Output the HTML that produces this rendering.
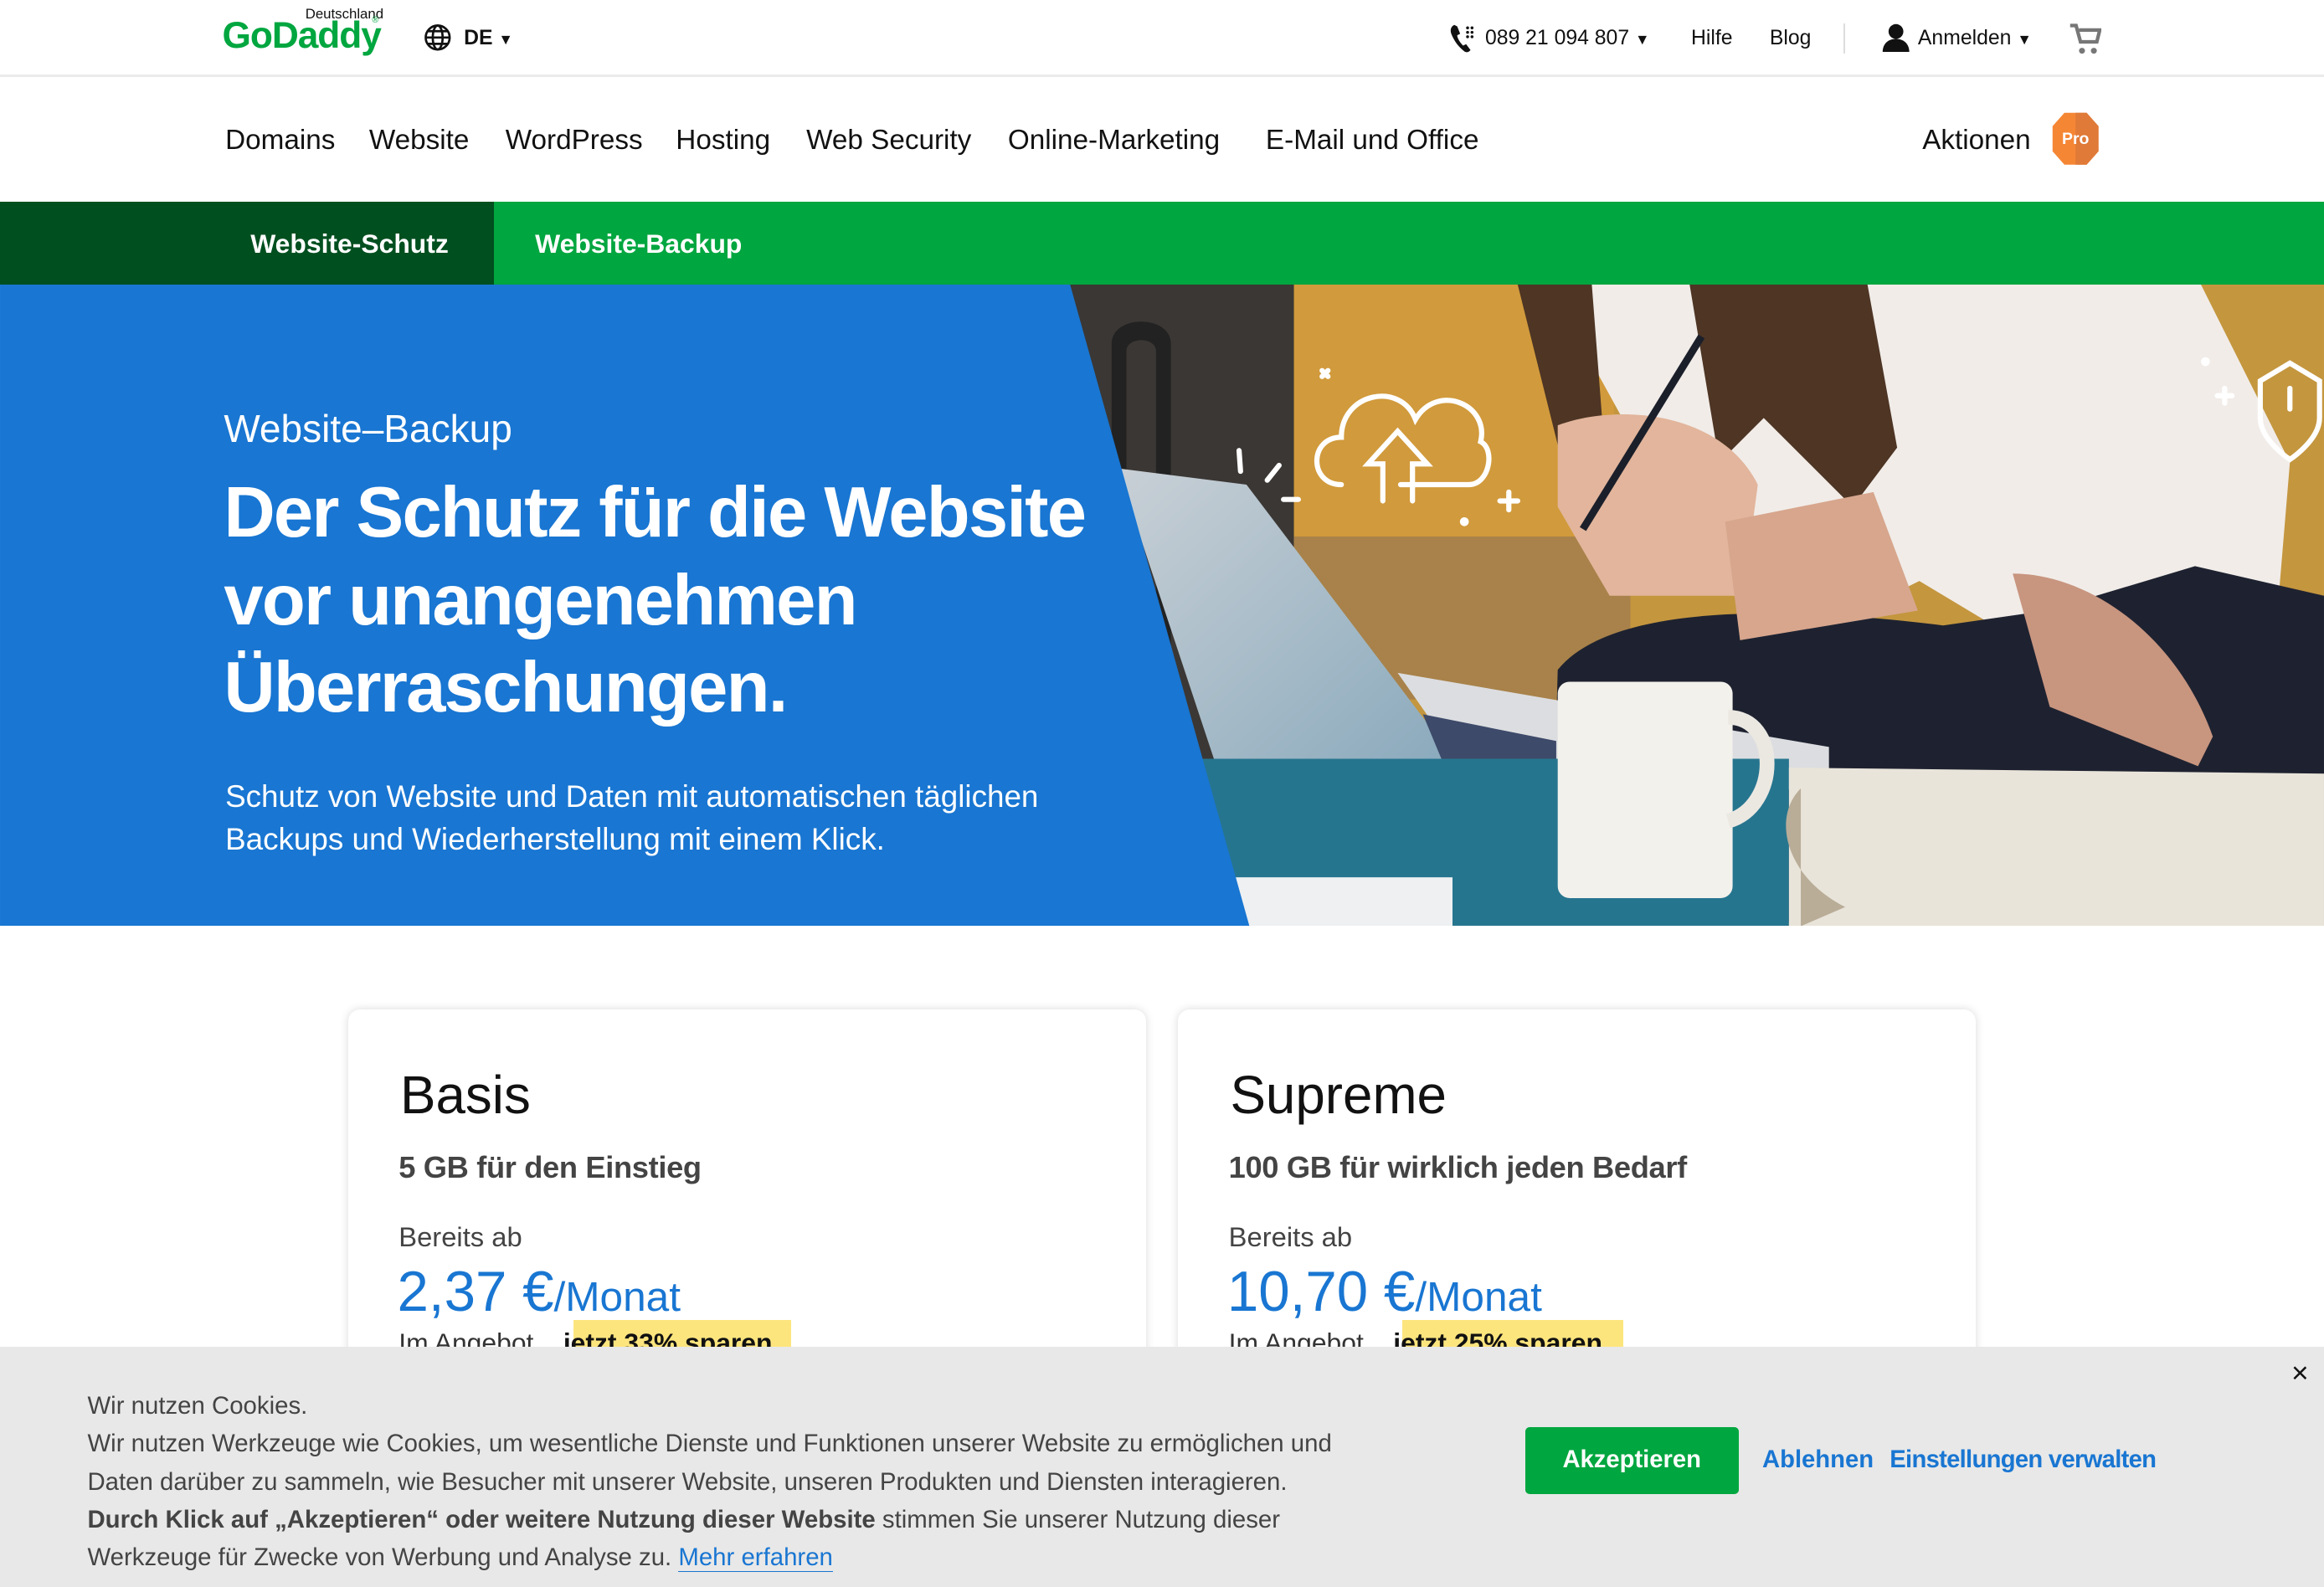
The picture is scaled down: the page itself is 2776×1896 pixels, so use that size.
<!DOCTYPE html>
<html><head><meta charset="utf-8">
<style>
*{margin:0;padding:0;box-sizing:border-box}
html,body{width:2776px;height:1896px;overflow:hidden;background:#fff}
#w{zoom:1.77041;width:1568px;height:1071px;position:relative;font-family:"Liberation Sans",sans-serif;color:#111;overflow:hidden}
.a{position:absolute;white-space:nowrap}
.nav{font-size:18.8px;top:84px;color:#111}
.top{font-size:14px;top:18px}
</style></head><body><div id="w">
<div class="a" style="left:206px;top:4px;font-size:9.5px;color:#111">Deutschland</div>
<div class="a" style="left:150px;top:10px;font-size:25px;font-weight:bold;color:#00a63f;letter-spacing:-.6px">GoDaddy</div>
<div class="a" style="left:251px;top:10px;font-size:6px;color:#00a63f">®</div>
<svg class="a" style="left:286px;top:16px" width="19" height="19" viewBox="0 0 20 20" fill="none" stroke="#111" stroke-width="1.6"><circle cx="10" cy="10" r="8.5"/><ellipse cx="10" cy="10" rx="3.5" ry="8.5"/><path d="M1.5 10h17M3 5.5h14M3 14.5h14"/></svg>
<div class="a top" style="left:313px;top:18px;font-size:14px;font-weight:bold">DE <span style="font-size:10px">▼</span></div>
<svg class="a" style="left:977px;top:16px" width="20" height="20" viewBox="0 0 20 20"><path d="M4 1c-2 1-3 3-2 6 2 5 5 9 9 12 2 1 3 0 4-1l-3-4-2 1c-2-2-4-5-4-7l2-1-2-5z" fill="#111"/><g fill="#111"><circle cx="13" cy="3" r="1"/><circle cx="16" cy="3" r="1"/><circle cx="13" cy="6" r="1"/><circle cx="16" cy="6" r="1"/><circle cx="13" cy="9" r="1"/><circle cx="16" cy="9" r="1"/></g></svg>
<div class="a top" style="left:1002px">089 21 094 807 <span style="font-size:10px">▼</span></div>
<div class="a top" style="left:1141px">Hilfe</div>
<div class="a top" style="left:1194px">Blog</div>
<div class="a" style="left:1244px;top:16px;width:1px;height:20px;background:#ddd"></div>
<svg class="a" style="left:1269px;top:15px" width="20" height="20" viewBox="0 0 20 20"><circle cx="10" cy="6" r="5" fill="#111"/><path d="M1 20c0-6 4-9 9-9s9 3 9 9z" fill="#111"/></svg>
<div class="a top" style="left:1294px">Anmelden <span style="font-size:10px">▼</span></div>
<svg class="a" style="left:1396px;top:15px" width="22" height="22" viewBox="0 0 22 22" fill="#777"><path d="M1 2h4l3 11h11l2-8H7" stroke="#777" stroke-width="2.4" fill="none"/><circle cx="9" cy="19" r="2"/><circle cx="17" cy="19" r="2"/></svg>
<div class="a" style="left:0;top:50px;width:1568px;height:2px;background:#ebebeb"></div>
<div class="a nav" style="left:152px">Domains</div>
<div class="a nav" style="left:249px">Website</div>
<div class="a nav" style="left:341px">WordPress</div>
<div class="a nav" style="left:456px">Hosting</div>
<div class="a nav" style="left:544px">Web Security</div>
<div class="a nav" style="left:680px">Online-Marketing</div>
<div class="a nav" style="left:854px">E-Mail und Office</div>
<div class="a nav" style="left:1297px">Aktionen</div>
<svg class="a" style="left:1384px;top:75px" width="33" height="37" viewBox="0 0 33 37"><path d="M9 1h15l8 9v17l-8 9H9l-8-9V10z" fill="#f58634"/><path d="M16.5 1h7.5l8 9v17l-8 9h-7.5z" fill="#e07a38"/><text x="16.5" y="22" font-family="Liberation Sans" font-size="11" font-weight="bold" fill="#fff" text-anchor="middle">Pro</text></svg>
<div class="a" style="left:0;top:136px;width:1568px;height:56px;background:#00a63f"></div>
<div class="a" style="left:0;top:136px;width:333px;height:56px;background:#004f1f"></div>
<div class="a" style="left:169px;top:154px;font-size:18px;font-weight:bold;color:#fff">Website-Schutz</div>
<div class="a" style="left:361px;top:154px;font-size:18px;font-weight:bold;color:#fff">Website-Backup</div>
<svg class="a" style="left:0;top:192px" width="1568" height="433" viewBox="0 0 1568 433">
<defs>
<linearGradient id="lap" x1="0" y1="0" x2="1" y2="1"><stop offset="0" stop-color="#c9d0d6"/><stop offset="1" stop-color="#7fa3b8"/></linearGradient>
</defs>
<rect x="700" y="0" width="868" height="433" fill="#c4963e"/>
<rect x="700" y="0" width="184" height="330" fill="#3b3734"/>
<path d="M750 40c0-20 40-20 40 0v230h-10v-225c0-10-20-10-20 0v225h-10z" fill="#222"/>
<rect x="873" y="0" width="216" height="210" fill="#d19a3c"/>
<rect x="873" y="170" width="227" height="110" fill="#a8824a"/>
<path d="M1045 0h440l60 120l-10 120l-60 10l-60-30l-70 10l-50-30l-80 40l-60-40z" fill="#f1ece8"/>
<path d="M1320 0h110l-30 40z" fill="#f1ece8"/>
<path d="M1024 0h50l10 130l-30-10zM1140 0h120l20 110l-30 40l-60-60l-30 30z" fill="#4e3524"/>
<path d="M1051 260c40-50 180-40 260-30l70-10 100-30 87 20v220h-460l-60-60z" fill="#1e2230"/>
<path d="M1051 95c40-15 110-10 135 40l-10 75-90 0-35-60z" fill="#e2b59c"/>
<path d="M1164 160l100-20 30 80-120 20z" fill="#d7a68d"/>
<path d="M1358 195c50 0 110 40 135 110l-10 20-100-40z" fill="#c8957f"/>
<path d="M1148 35l-80 130" stroke="#1b1f2a" stroke-width="5"/>
<path d="M754 124l87 11 172 227-194-42z" fill="url(#lap)"/>
<path d="M943 262l291 50v25l-183 25h-38z" fill="#dcdde0"/>
<path d="M960 290l90 18v40l-70-10z" fill="#3d4a6a"/>
<path d="M800 320l407 0v113H830z" fill="#26758f"/>
<path d="M830 400h150v33H840z" fill="#eef0f2"/>
<path d="M1207 326l361 4v103h-361z" fill="#e9e4da"/>
<path d="M1215 340c-20 20-10 60 30 80l-30 13z" fill="#b9ad98"/>
<rect x="1051" y="268" width="118" height="146" rx="8" fill="#f3f1ec"/>
<path d="M1166 292c35 0 35 60 0 70" stroke="#ebe8e2" stroke-width="10" fill="none"/>
<g fill="none" stroke="#fff" stroke-width="3.5" stroke-linecap="round">
<path d="M905 135c-22 0-22-32 0-32c0-30 40-38 50-12c15-25 50-10 44 15c10 5 6 29-8 29h-46"/>
<path d="M933 146v-25h-10l20-22 20 22h-10v25"/>
<path d="M1525 65l20-12 20 12v25c0 15-20 28-20 28s-20-13-20-28z"/>
<path d="M1545 70v14M1018 140v12M1012 146h12M1501 70v10M1496 75h10M836 112l1 14M855 132l8-10M866 145h10M892 58l4 4M896 58l-4 4"/>
</g>
<circle cx="988" cy="160" r="3" fill="#fff"/><circle cx="1488" cy="52" r="3" fill="#fff"/>
<path d="M0 0h722l121 433H0z" fill="#1976d2"/>
</svg>
<div class="a" style="left:151px;top:274px;font-size:26px;color:#fff">Website–Backup</div>
<div class="a" style="left:151px;top:317px;font-size:48px;font-weight:bold;color:#fff;letter-spacing:-1px;line-height:59px">Der Schutz für die Website<br>vor unangenehmen<br>Überraschungen.</div>
<div class="a" style="left:152px;top:523px;font-size:20.8px;color:#fff;line-height:29px">Schutz von Website und Daten mit automatischen täglichen<br>Backups und Wiederherstellung mit einem Klick.</div>
<div class="a" style="left:235px;top:681px;width:538px;height:400px;border-radius:8px;box-shadow:0 0 6px rgba(0,0,0,.15);background:#fff"></div>
<div class="a" style="left:795px;top:681px;width:538px;height:400px;border-radius:8px;box-shadow:0 0 6px rgba(0,0,0,.15);background:#fff"></div>
<div class="a" style="left:270px;top:718px;font-size:36px;color:#111">Basis</div>
<div class="a" style="left:269px;top:776px;font-size:20.5px;color:#444;font-weight:bold;letter-spacing:-.2px">5 GB für den Einstieg</div>
<div class="a" style="left:269px;top:824px;font-size:18.5px;color:#444">Bereits ab</div>
<div class="a" style="left:268px;top:850px;font-size:38px;color:#1976d2">2,37 €<span style="font-size:28px">/Monat</span></div>
<div class="a" style="left:387px;top:891px;width:147px;height:30px;background:#fde57e"></div>
<div class="a" style="left:269px;top:896px;font-size:18px;color:#333">Im Angebot &nbsp;&nbsp;&nbsp;<b style="color:#111">jetzt 33% sparen</b></div>
<div class="a" style="left:830px;top:718px;font-size:36px;color:#111">Supreme</div>
<div class="a" style="left:829px;top:776px;font-size:20.5px;color:#444;font-weight:bold;letter-spacing:-.2px">100 GB für wirklich jeden Bedarf</div>
<div class="a" style="left:829px;top:824px;font-size:18.5px;color:#444">Bereits ab</div>
<div class="a" style="left:828px;top:850px;font-size:38px;color:#1976d2">10,70 €<span style="font-size:28px">/Monat</span></div>
<div class="a" style="left:946px;top:891px;width:149px;height:30px;background:#fde57e"></div>
<div class="a" style="left:829px;top:896px;font-size:18px;color:#333">Im Angebot &nbsp;&nbsp;&nbsp;<b style="color:#111">jetzt 25% sparen</b></div>
<div class="a" style="left:0;top:909px;width:1568px;height:162px;background:#e8e8e8"></div>
<div class="a" style="left:59px;top:936px;font-size:16.6px;color:#444;line-height:25.6px">Wir nutzen Cookies.<br>Wir nutzen Werkzeuge wie Cookies, um wesentliche Dienste und Funktionen unserer Website zu ermöglichen und<br>Daten darüber zu sammeln, wie Besucher mit unserer Website, unseren Produkten und Diensten interagieren.<br><b>Durch Klick auf „Akzeptieren“ oder weitere Nutzung dieser Website</b> stimmen Sie unserer Nutzung dieser<br>Werkzeuge für Zwecke von Werbung und Analyse zu. <span style="color:#1976d2;border-bottom:1px solid #1976d2">Mehr erfahren</span></div>
<div class="a" style="left:1029px;top:963px;width:144px;height:45px;background:#00a63f;border-radius:3px;color:#fff;font-size:16.5px;font-weight:bold;text-align:center;line-height:45px">Akzeptieren</div>
<div class="a" style="left:1189px;top:976px;font-size:16.5px;color:#1976d2;font-weight:bold">Ablehnen</div>
<div class="a" style="left:1275px;top:976px;font-size:16.5px;color:#1976d2;font-weight:bold;letter-spacing:-.4px">Einstellungen verwalten</div>
<div class="a" style="left:1546px;top:915px;font-size:20px;color:#111">×</div>
</div></body></html>
